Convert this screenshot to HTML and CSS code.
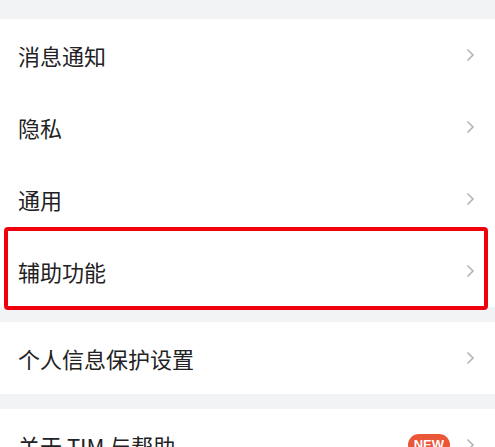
FILE: index.html
```html
<!DOCTYPE html>
<html lang="zh-CN">
<head>
<meta charset="UTF-8">
<meta name="viewport" content="width=device-width, initial-scale=1.0">
<title>设置</title>
<link rel="stylesheet" href="styles.css">
</head>
<body>
  <div class="group">
    <div class="row"><span class="label">消息通知</span><span class="arrow"><svg width="9" height="14" viewBox="0 0 9 14"><path d="M1.5 1.5 L7 7 L1.5 12.5" fill="none" stroke="#b4b4b6" stroke-width="1.6"/></svg></span></div>
    <div class="row"><span class="label">隐私</span><span class="arrow"><svg width="9" height="14" viewBox="0 0 9 14"><path d="M1.5 1.5 L7 7 L1.5 12.5" fill="none" stroke="#b4b4b6" stroke-width="1.6"/></svg></span></div>
    <div class="row"><span class="label">通用</span><span class="arrow"><svg width="9" height="14" viewBox="0 0 9 14"><path d="M1.5 1.5 L7 7 L1.5 12.5" fill="none" stroke="#b4b4b6" stroke-width="1.6"/></svg></span></div>
    <div class="row highlighted"><span class="label">辅助功能</span><span class="arrow"><svg width="9" height="14" viewBox="0 0 9 14"><path d="M1.5 1.5 L7 7 L1.5 12.5" fill="none" stroke="#b4b4b6" stroke-width="1.6"/></svg></span></div>
  </div>

  <div class="group">
    <div class="row"><span class="label">个人信息保护设置</span><span class="arrow"><svg width="9" height="14" viewBox="0 0 9 14"><path d="M1.5 1.5 L7 7 L1.5 12.5" fill="none" stroke="#b4b4b6" stroke-width="1.6"/></svg></span></div>
  </div>

  <div class="group">
    <div class="row"><span class="label">关于 TIM 与帮助</span><span class="badge">NEW</span><span class="arrow"><svg width="9" height="14" viewBox="0 0 9 14"><path d="M1.5 1.5 L7 7 L1.5 12.5" fill="none" stroke="#b4b4b6" stroke-width="1.6"/></svg></span></div>
  </div>
</body>
</html>
```

FILE: styles.css
```css
/* Settings list */
body {
  margin: 0;
  padding-top: 19px;
  background-color: #f2f3f5;
  font-family: "Noto Sans CJK SC", "Noto Sans", sans-serif;
  overflow: hidden;
}
.group {
  background-color: #fff;
  margin-bottom: 15px;
}
.row {
  position: relative;
  display: flex;
  align-items: center;
  height: 72px;
  padding: 0 20px 0 18px;
}
.label {
  flex: 1;
  font-size: 22px;
  color: #222224;
}
.arrow {
  display: flex;
  align-items: center;
}
.badge {
  background-color: #ea5638;
  color: #fff;
  font-family: "Liberation Sans", sans-serif;
  font-size: 13px;
  font-weight: bold;
  line-height: 22px;
  padding: 0 6px;
  border-radius: 11px;
  margin-right: 16px;
}
.highlighted::after {
  content: "";
  position: absolute;
  top: -8px;
  bottom: -3px;
  left: 4px;
  right: 7px;
  border: 4px solid #f0000c;
  border-radius: 4px;
}
```
